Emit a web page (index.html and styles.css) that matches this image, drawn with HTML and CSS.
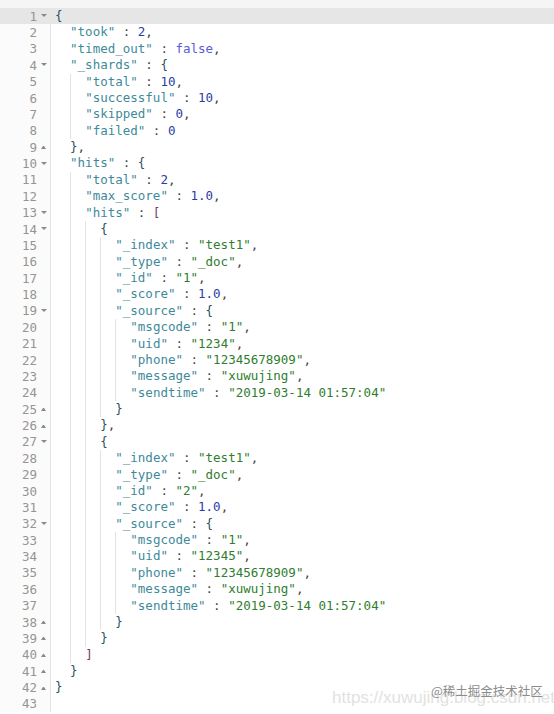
FILE: index.html
```html
<!DOCTYPE html>
<html lang="en">
<head>
<meta charset="utf-8">
<title>Console response</title>
<link rel="stylesheet" href="styles.css">
</head>
<body>
<div class="page">
  <div class="topbar"></div>
  <div class="editor">
    <div class="gutter">
      <div class="gl active"><span class="num">1</span><span class="fold down"></span></div>
      <div class="gl"><span class="num">2</span><span class="fold"></span></div>
      <div class="gl"><span class="num">3</span><span class="fold"></span></div>
      <div class="gl"><span class="num">4</span><span class="fold down"></span></div>
      <div class="gl"><span class="num">5</span><span class="fold"></span></div>
      <div class="gl"><span class="num">6</span><span class="fold"></span></div>
      <div class="gl"><span class="num">7</span><span class="fold"></span></div>
      <div class="gl"><span class="num">8</span><span class="fold"></span></div>
      <div class="gl"><span class="num">9</span><span class="fold up"></span></div>
      <div class="gl"><span class="num">10</span><span class="fold down"></span></div>
      <div class="gl"><span class="num">11</span><span class="fold"></span></div>
      <div class="gl"><span class="num">12</span><span class="fold"></span></div>
      <div class="gl"><span class="num">13</span><span class="fold down"></span></div>
      <div class="gl"><span class="num">14</span><span class="fold down"></span></div>
      <div class="gl"><span class="num">15</span><span class="fold"></span></div>
      <div class="gl"><span class="num">16</span><span class="fold"></span></div>
      <div class="gl"><span class="num">17</span><span class="fold"></span></div>
      <div class="gl"><span class="num">18</span><span class="fold"></span></div>
      <div class="gl"><span class="num">19</span><span class="fold down"></span></div>
      <div class="gl"><span class="num">20</span><span class="fold"></span></div>
      <div class="gl"><span class="num">21</span><span class="fold"></span></div>
      <div class="gl"><span class="num">22</span><span class="fold"></span></div>
      <div class="gl"><span class="num">23</span><span class="fold"></span></div>
      <div class="gl"><span class="num">24</span><span class="fold"></span></div>
      <div class="gl"><span class="num">25</span><span class="fold up"></span></div>
      <div class="gl"><span class="num">26</span><span class="fold up"></span></div>
      <div class="gl"><span class="num">27</span><span class="fold down"></span></div>
      <div class="gl"><span class="num">28</span><span class="fold"></span></div>
      <div class="gl"><span class="num">29</span><span class="fold"></span></div>
      <div class="gl"><span class="num">30</span><span class="fold"></span></div>
      <div class="gl"><span class="num">31</span><span class="fold"></span></div>
      <div class="gl"><span class="num">32</span><span class="fold down"></span></div>
      <div class="gl"><span class="num">33</span><span class="fold"></span></div>
      <div class="gl"><span class="num">34</span><span class="fold"></span></div>
      <div class="gl"><span class="num">35</span><span class="fold"></span></div>
      <div class="gl"><span class="num">36</span><span class="fold"></span></div>
      <div class="gl"><span class="num">37</span><span class="fold"></span></div>
      <div class="gl"><span class="num">38</span><span class="fold up"></span></div>
      <div class="gl"><span class="num">39</span><span class="fold up"></span></div>
      <div class="gl"><span class="num">40</span><span class="fold up"></span></div>
      <div class="gl"><span class="num">41</span><span class="fold up"></span></div>
      <div class="gl"><span class="num">42</span><span class="fold up"></span></div>
      <div class="gl"><span class="num">43</span><span class="fold"></span></div>
    </div>
    <div class="code">
      <div class="ln active"><span class="br">{</span></div>
      <div class="ln"><span class="ig">  </span><span class="k">"took"</span><span class="p"> : </span><span class="n">2</span><span class="p">,</span></div>
      <div class="ln"><span class="ig">  </span><span class="k">"timed_out"</span><span class="p"> : </span><span class="b">false</span><span class="p">,</span></div>
      <div class="ln"><span class="ig">  </span><span class="k">"_shards"</span><span class="p"> : </span><span class="br">{</span></div>
      <div class="ln"><span class="ig">  </span><span class="ig g">  </span><span class="k">"total"</span><span class="p"> : </span><span class="n">10</span><span class="p">,</span></div>
      <div class="ln"><span class="ig">  </span><span class="ig g">  </span><span class="k">"successful"</span><span class="p"> : </span><span class="n">10</span><span class="p">,</span></div>
      <div class="ln"><span class="ig">  </span><span class="ig g">  </span><span class="k">"skipped"</span><span class="p"> : </span><span class="n">0</span><span class="p">,</span></div>
      <div class="ln"><span class="ig">  </span><span class="ig g">  </span><span class="k">"failed"</span><span class="p"> : </span><span class="n">0</span></div>
      <div class="ln"><span class="ig">  </span><span class="br">}</span><span class="p">,</span></div>
      <div class="ln"><span class="ig">  </span><span class="k">"hits"</span><span class="p"> : </span><span class="br">{</span></div>
      <div class="ln"><span class="ig">  </span><span class="ig g">  </span><span class="k">"total"</span><span class="p"> : </span><span class="n">2</span><span class="p">,</span></div>
      <div class="ln"><span class="ig">  </span><span class="ig g">  </span><span class="k">"max_score"</span><span class="p"> : </span><span class="n">1.0</span><span class="p">,</span></div>
      <div class="ln"><span class="ig">  </span><span class="ig g">  </span><span class="k">"hits"</span><span class="p"> : </span><span class="bk">[</span></div>
      <div class="ln"><span class="ig">  </span><span class="ig g">  </span><span class="ig g">  </span><span class="br">{</span></div>
      <div class="ln"><span class="ig">  </span><span class="ig g">  </span><span class="ig g">  </span><span class="ig g">  </span><span class="k">"_index"</span><span class="p"> : </span><span class="s">"test1"</span><span class="p">,</span></div>
      <div class="ln"><span class="ig">  </span><span class="ig g">  </span><span class="ig g">  </span><span class="ig g">  </span><span class="k">"_type"</span><span class="p"> : </span><span class="s">"_doc"</span><span class="p">,</span></div>
      <div class="ln"><span class="ig">  </span><span class="ig g">  </span><span class="ig g">  </span><span class="ig g">  </span><span class="k">"_id"</span><span class="p"> : </span><span class="s">"1"</span><span class="p">,</span></div>
      <div class="ln"><span class="ig">  </span><span class="ig g">  </span><span class="ig g">  </span><span class="ig g">  </span><span class="k">"_score"</span><span class="p"> : </span><span class="n">1.0</span><span class="p">,</span></div>
      <div class="ln"><span class="ig">  </span><span class="ig g">  </span><span class="ig g">  </span><span class="ig g">  </span><span class="k">"_source"</span><span class="p"> : </span><span class="br">{</span></div>
      <div class="ln"><span class="ig">  </span><span class="ig g">  </span><span class="ig g">  </span><span class="ig g">  </span><span class="ig g">  </span><span class="k">"msgcode"</span><span class="p"> : </span><span class="s">"1"</span><span class="p">,</span></div>
      <div class="ln"><span class="ig">  </span><span class="ig g">  </span><span class="ig g">  </span><span class="ig g">  </span><span class="ig g">  </span><span class="k">"uid"</span><span class="p"> : </span><span class="s">"1234"</span><span class="p">,</span></div>
      <div class="ln"><span class="ig">  </span><span class="ig g">  </span><span class="ig g">  </span><span class="ig g">  </span><span class="ig g">  </span><span class="k">"phone"</span><span class="p"> : </span><span class="s">"12345678909"</span><span class="p">,</span></div>
      <div class="ln"><span class="ig">  </span><span class="ig g">  </span><span class="ig g">  </span><span class="ig g">  </span><span class="ig g">  </span><span class="k">"message"</span><span class="p"> : </span><span class="s">"xuwujing"</span><span class="p">,</span></div>
      <div class="ln"><span class="ig">  </span><span class="ig g">  </span><span class="ig g">  </span><span class="ig g">  </span><span class="ig g">  </span><span class="k">"sendtime"</span><span class="p"> : </span><span class="s">"2019-03-14 01:57:04"</span></div>
      <div class="ln"><span class="ig">  </span><span class="ig g">  </span><span class="ig g">  </span><span class="ig g">  </span><span class="br">}</span></div>
      <div class="ln"><span class="ig">  </span><span class="ig g">  </span><span class="ig g">  </span><span class="br">}</span><span class="p">,</span></div>
      <div class="ln"><span class="ig">  </span><span class="ig g">  </span><span class="ig g">  </span><span class="br">{</span></div>
      <div class="ln"><span class="ig">  </span><span class="ig g">  </span><span class="ig g">  </span><span class="ig g">  </span><span class="k">"_index"</span><span class="p"> : </span><span class="s">"test1"</span><span class="p">,</span></div>
      <div class="ln"><span class="ig">  </span><span class="ig g">  </span><span class="ig g">  </span><span class="ig g">  </span><span class="k">"_type"</span><span class="p"> : </span><span class="s">"_doc"</span><span class="p">,</span></div>
      <div class="ln"><span class="ig">  </span><span class="ig g">  </span><span class="ig g">  </span><span class="ig g">  </span><span class="k">"_id"</span><span class="p"> : </span><span class="s">"2"</span><span class="p">,</span></div>
      <div class="ln"><span class="ig">  </span><span class="ig g">  </span><span class="ig g">  </span><span class="ig g">  </span><span class="k">"_score"</span><span class="p"> : </span><span class="n">1.0</span><span class="p">,</span></div>
      <div class="ln"><span class="ig">  </span><span class="ig g">  </span><span class="ig g">  </span><span class="ig g">  </span><span class="k">"_source"</span><span class="p"> : </span><span class="br">{</span></div>
      <div class="ln"><span class="ig">  </span><span class="ig g">  </span><span class="ig g">  </span><span class="ig g">  </span><span class="ig g">  </span><span class="k">"msgcode"</span><span class="p"> : </span><span class="s">"1"</span><span class="p">,</span></div>
      <div class="ln"><span class="ig">  </span><span class="ig g">  </span><span class="ig g">  </span><span class="ig g">  </span><span class="ig g">  </span><span class="k">"uid"</span><span class="p"> : </span><span class="s">"12345"</span><span class="p">,</span></div>
      <div class="ln"><span class="ig">  </span><span class="ig g">  </span><span class="ig g">  </span><span class="ig g">  </span><span class="ig g">  </span><span class="k">"phone"</span><span class="p"> : </span><span class="s">"12345678909"</span><span class="p">,</span></div>
      <div class="ln"><span class="ig">  </span><span class="ig g">  </span><span class="ig g">  </span><span class="ig g">  </span><span class="ig g">  </span><span class="k">"message"</span><span class="p"> : </span><span class="s">"xuwujing"</span><span class="p">,</span></div>
      <div class="ln"><span class="ig">  </span><span class="ig g">  </span><span class="ig g">  </span><span class="ig g">  </span><span class="ig g">  </span><span class="k">"sendtime"</span><span class="p"> : </span><span class="s">"2019-03-14 01:57:04"</span></div>
      <div class="ln"><span class="ig">  </span><span class="ig g">  </span><span class="ig g">  </span><span class="ig g">  </span><span class="br">}</span></div>
      <div class="ln"><span class="ig">  </span><span class="ig g">  </span><span class="ig g">  </span><span class="br">}</span></div>
      <div class="ln"><span class="ig">  </span><span class="ig g">  </span><span class="bk">]</span></div>
      <div class="ln"><span class="ig">  </span><span class="br">}</span></div>
      <div class="ln"><span class="br">}</span></div>
      <div class="ln"></div>
    </div>
  </div>
  <div class="watermark">
    <span class="wm-url">https://xuwujing.blog.csdn.net</span>
    <span class="wm-brand">@稀土掘金技术社区</span>
  </div>
</div>
</body>
</html>
```
FILE: styles.css
```css
html, body {
  margin: 0;
  padding: 0;
  background: #ffffff;
}

.page {
  position: relative;
  width: 554px;
  height: 714px;
  overflow: hidden;
  font-family: "DejaVu Sans Mono", "Liberation Mono", monospace;
  font-size: 12.5px;
}

.topbar {
  height: 8px;
  background: #f5f5f5;
}

.editor {
  display: flex;
}

.gutter {
  width: 50px;
  flex: none;
  background: #fbfbfb;
  border-right: 1px solid #e4e4e4;
  color: #959595;
}

.gl {
  display: flex;
  align-items: center;
  height: 16.38px;
  padding-left: 3px;
}

.gl.active {
  background: #e6e6e6;
}

.num {
  width: 34px;
  text-align: right;
}

.fold {
  width: 6px;
  height: 4px;
  margin-left: 4px;
  box-sizing: border-box;
}

.fold.down {
  border-left: 3px solid transparent;
  border-right: 3px solid transparent;
  border-top: 3px solid #8a8a8a;
}

.fold.up {
  border-left: 2.5px solid transparent;
  border-right: 2.5px solid transparent;
  border-bottom: 3px solid #8a8a8a;
  width: 5px;
}

.code {
  flex: 1;
  padding-left: 4px;
  color: #444;
}

.ln {
  height: 16.38px;
  line-height: 16.38px;
  white-space: pre;
  margin-left: -4px;
  padding-left: 4px;
}

.ln.active {
  background: #e6e6e6;
}

.ig {
  display: inline-block;
  height: 16.38px;
  vertical-align: top;
  white-space: pre;
}

.ig.g {
  background: linear-gradient(#e3e3e3, #e3e3e3) 0 0 / 1px 100% no-repeat;
}

.k { color: #3e8a9a; }
.s { color: #2f7d2f; }
.n { color: #2a3ca6; }
.b { color: #5a5ad8; }
.p { color: #444444; }
.br { color: #2d4f5e; }
.bk { color: #6e3a6e; }

.watermark {
  position: absolute;
  left: 332px;
  top: 679px;
  width: 240px;
  height: 30px;
  font-family: "Liberation Sans", Arial, "Noto Sans CJK SC", sans-serif;
}

.wm-url {
  position: absolute;
  left: 0;
  top: 9px;
  font-size: 17px;
  color: #e2e2e2;
  white-space: nowrap;
}

.wm-brand {
  position: absolute;
  left: 99px;
  top: 2px;
  font-family: "Noto Sans CJK SC", sans-serif;
  font-size: 12.5px;
  color: #8c8c8c;
  white-space: nowrap;
}
```
